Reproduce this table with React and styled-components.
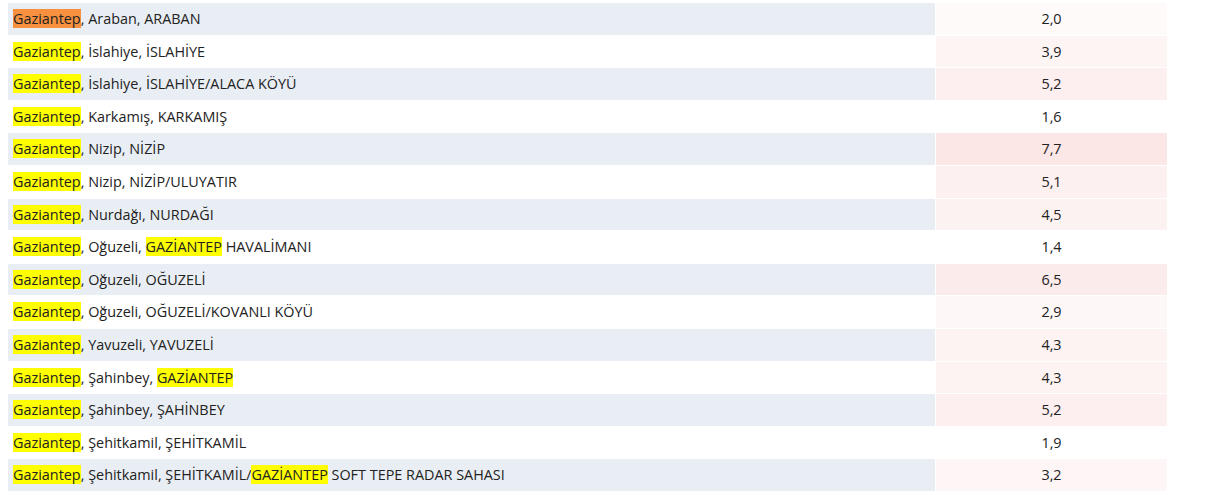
import styled, { createGlobalStyle } from 'styled-components';

const GlobalStyle = createGlobalStyle`
  body {
    margin: 0;
    padding: 2px 0 0 7px;
    background: #fff;
    font-family: 'Open Sans', 'Liberation Sans', sans-serif;
    color: #222;
  }
`;

const Table = styled.table`
  border-collapse: separate;
  border-spacing: 1px;
  width: 1161px;
  font-size: 14.4px;
  line-height: 19.6px;
`;

const Row = styled.tr`
  background: ${({ $striped }) => ($striped ? '#e9eef4' : '#fff')};
`;

const PlaceCell = styled.td`
  width: 922px;
  padding: 6px 0 6px 5px;
  text-align: left;
`;

const ValueCell = styled.td`
  width: 231px;
  padding: 6px 0;
  text-align: center;
  background: #fff;
`;

const Shade = styled.span`
  display: block;
  margin: -6px 0;
  padding: 6px 0;
`;

const Mark = styled.mark`
  background: ${({ $current }) => ($current ? '#f7913f' : '#ffff00')};
  color: inherit;
  padding: 0;
`;

const rows = [
  [['Araban', 'ARABAN'], '2,0'],
  [['İslahiye', 'İSLAHİYE'], '3,9'],
  [['İslahiye', 'İSLAHİYE/ALACA KÖYÜ'], '5,2'],
  [['Karkamış', 'KARKAMIŞ'], '1,6'],
  [['Nizip', 'NİZİP'], '7,7'],
  [['Nizip', 'NİZİP/ULUYATIR'], '5,1'],
  [['Nurdağı', 'NURDAĞI'], '4,5'],
  [['Oğuzeli', [<Mark key="m">GAZİANTEP</Mark>, ' HAVALİMANI']], '1,4'],
  [['Oğuzeli', 'OĞUZELİ'], '6,5'],
  [['Oğuzeli', 'OĞUZELİ/KOVANLI KÖYÜ'], '2,9'],
  [['Yavuzeli', 'YAVUZELİ'], '4,3'],
  [['Şahinbey', <Mark key="m">GAZİANTEP</Mark>], '4,3'],
  [['Şahinbey', 'ŞAHİNBEY'], '5,2'],
  [['Şehitkamil', 'ŞEHİTKAMİL'], '1,9'],
  [['Şehitkamil', ['ŞEHİTKAMİL/', <Mark key="m">GAZİANTEP</Mark>, ' SOFT TEPE RADAR SAHASI']], '3,2'],
];

function shade(value) {
  const v = parseFloat(value.replace(',', '.'));
  const a = v < 2 ? 0 : 0.03 + (v - 2) * 0.02;
  return `rgba(232, 90, 90, ${a.toFixed(3)})`;
}

export default function App() {
  return (
    <>
      <GlobalStyle />
      <Table>
        <tbody>
          {rows.map(([[district, station], value], i) => (
            <Row key={i} $striped={i % 2 === 0}>
              <PlaceCell>
                <Mark $current={i === 0}>Gaziantep</Mark>, {district}, {station}
              </PlaceCell>
              <ValueCell>
                <Shade style={{ background: shade(value) }}>{value}</Shade>
              </ValueCell>
            </Row>
          ))}
        </tbody>
      </Table>
    </>
  );
}
